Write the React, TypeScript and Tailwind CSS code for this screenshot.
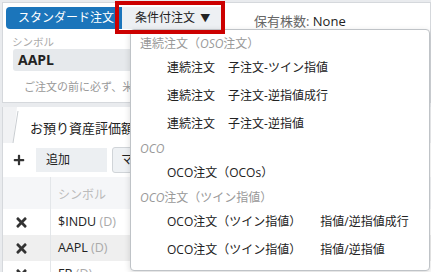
import React from 'react';
import { FaTimes, FaPlus } from 'react-icons/fa';

interface MenuEntry {
  kind: 'header' | 'item';
  main: React.ReactNode;
  sub?: string;
  gap?: string;
}

const menu: MenuEntry[] = [
  { kind: 'header', main: <>連続注文（<i>OSO</i>注文）</> },
  { kind: 'item', main: '連続注文', sub: '子注文-ツイン指値', gap: 'ml-[13px]' },
  { kind: 'item', main: '連続注文', sub: '子注文-逆指値成行', gap: 'ml-[13px]' },
  { kind: 'item', main: '連続注文', sub: '子注文-逆指値', gap: 'ml-[13px]' },
  { kind: 'header', main: <i>OCO</i> },
  { kind: 'item', main: 'OCO注文（OCOs）' },
  { kind: 'header', main: <><i>OCO</i>注文（ツイン指値）</> },
  { kind: 'item', main: 'OCO注文（ツイン指値）', sub: '指値/逆指値成行', gap: 'ml-[19px]' },
  { kind: 'item', main: 'OCO注文（ツイン指値）', sub: '指値/逆指値', gap: 'ml-[19px]' },
];

const rows = [
  { symbol: '$INDU', bg: 'bg-white' },
  { symbol: 'AAPL', bg: 'bg-[#efefef]' },
  { symbol: 'FB', bg: 'bg-white' },
];

const App: React.FC = () => {
  return (
    <div className="relative w-[431px] h-[272px] overflow-hidden bg-[#e9ebee] pt-[2px] pl-[2px] font-['Open_Sans','Noto_Sans_CJK_JP',sans-serif] text-[#222]">
      {/* Order panel */}
      <div className="h-[101px] bg-white border border-[#d5d8dc] pl-[3px] pt-[4px]">
        <div className="flex items-center h-[22px]">
          <button className="w-[116px] h-[22px] rounded-l-[4px] bg-[#1b75bb] text-white text-[12px] pl-[12px] text-left leading-[22px]">
            スタンダード注文
          </button>
          <button className="w-[100px] h-[22px] bg-[#edf0f3] text-[12px] pl-[13px] text-left leading-[22px]">
            条件付注文 <span className="text-[10px] ml-[2px]">▼</span>
          </button>
          <div className="ml-[32px] pt-[8px] text-[13px]">
            <span className="text-[#666]">保有株数:</span> <span>None</span>
          </div>
        </div>
        <div className="ml-[6px] mt-[6px] text-[10.5px] leading-[14px] text-[#aaa]">シンボル</div>
        <div className="ml-[7px] w-[170px] h-[22px] rounded-[3px] bg-[#e6e9ec] pl-[5px] text-[14px] font-bold leading-[22px]">
          AAPL
        </div>
        <div className="ml-[18px] mt-[9px] text-[11px] leading-[14px] text-[#999] whitespace-nowrap">
          ご注文の前に必ず、米国株式取引のリスクをご確認ください
        </div>
      </div>

      {/* Positions panel */}
      <div className="mt-[4px] bg-white border-l border-[#d5d8dc]">
        <div className="relative flex h-[36px] bg-[#f1f2f4] pl-[10px]">
          <div className="relative w-[150px] bg-white pl-[17px] pt-[12px] text-[13px] leading-[18px] [clip-path:polygon(4px_0,100%_0,100%_100%,0_100%)]">
            お預り資産評価額
          </div>
          <svg className="absolute left-[9px] top-[4px]" width="8" height="32" viewBox="0 0 8 32">
            <line x1="6" y1="0" x2="1" y2="32" stroke="#c9cdd1" strokeWidth="1" />
          </svg>
        </div>
        <div className="flex items-center h-[34px] pl-[10px]">
          <FaPlus className="text-[#333]" size={12} />
          <div className="ml-[11px] w-[71px] h-[24px] bg-[#eceff2] pl-[10px] text-[12px] leading-[24px]">追加</div>
          <div className="ml-[5px] w-[80px] h-[26px] rounded-[3px] border border-[#d0d4d8] bg-[#eef1f4] pl-[8px] text-[12px] leading-[24px]">
            マーケット
          </div>
        </div>
        <div className="flex h-[32px] bg-[#f5f6f8]">
          <div className="w-[48px] border-r border-[#e3e6e9]" />
          <div className="pl-[7px] pt-[2px] text-[12px] leading-[32px] text-[#bbb]">シンボル</div>
        </div>
        {rows.map((r) => (
          <div key={r.symbol} className={`flex h-[26px] ${r.bg}`}>
            <div className="w-[48px] border-r border-[#e3e6e9] flex items-center pl-[11px]">
              <FaTimes className="text-[#333]" size={15} />
            </div>
            <div className="pl-[7px] text-[12.5px] leading-[26px]">
              {r.symbol} <span className="text-[#aaa]">(D)</span>
            </div>
          </div>
        ))}
      </div>

      {/* Dropdown menu */}
      <div className="absolute left-[130px] top-[29px] w-[300px] h-[242px] rounded-[4px] border border-[#bfc3c7] bg-white pt-[3px] shadow-[0_2px_6px_rgba(0,0,0,0.15)]">
        {menu.map((m, i) =>
          m.kind === 'header' ? (
            <div key={i} className="h-[21px] pl-[9px] text-[12px] leading-[21px] text-[#999]">
              {m.main}
            </div>
          ) : (
            <div key={i} className="flex h-[28px] pl-[36px] text-[12px] leading-[28px] whitespace-nowrap">
              <span>{m.main}</span>
              {m.sub && <span className={m.gap}>{m.sub}</span>}
            </div>
          )
        )}
      </div>

      {/* Highlight box */}
      <div className="absolute left-[115px] top-[1px] w-[110px] h-[33px] border-[4px] border-[#cc0000]" />
    </div>
  );
};

export default App;
